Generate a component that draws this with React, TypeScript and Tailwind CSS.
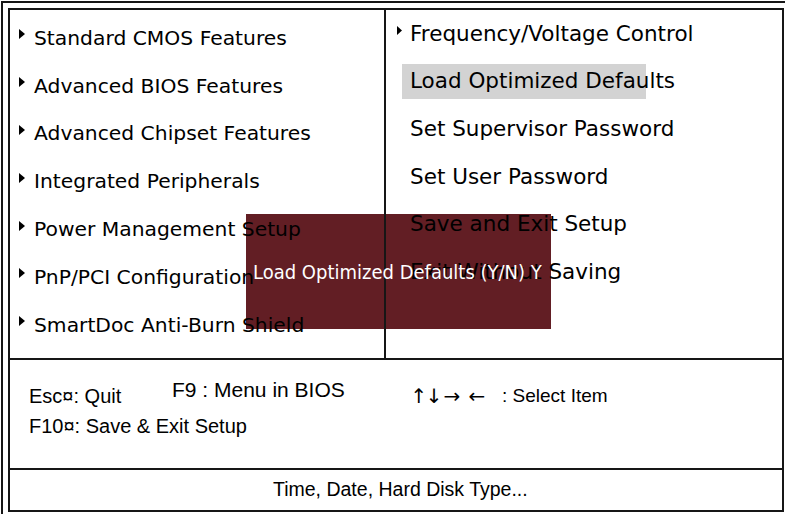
import React from "react";

const leftItems = [
  "Standard CMOS Features",
  "Advanced BIOS Features",
  "Advanced Chipset Features",
  "Integrated Peripherals",
  "Power Management Setup",
  "PnP/PCI Configuration",
  "SmartDoc Anti-Burn Shield",
];

const rightItems = [
  "Set Supervisor Password",
  "Set User Password",
  "Save and Exit Setup",
  "Exit Without Saving",
];

function Arrow({ small }: { small?: boolean }) {
  return small ? (
    <svg width="5" height="9" viewBox="0 0 5 9" className="shrink-0 mb-[6px]">
      <polygon points="0,0 5,4.5 0,9" fill="#000" />
    </svg>
  ) : (
    <svg width="6" height="10" viewBox="0 0 6 10" className="shrink-0 mb-[7px]">
      <polygon points="0,0 6,5 0,10" fill="#000" />
    </svg>
  );
}

export default function App() {
  return (
    <div className="relative isolate w-[785px] h-[514px] overflow-hidden bg-white pl-[1px] pt-[1px] text-black">
      <div className="h-full border-t-2 border-l-2 border-[#161616] pl-[5px] pt-[5px]">
        <div className="flex h-[504px] w-[776px] flex-col border-2 border-[#161616]">
          {/* menu */}
          <div className="flex h-[350px] border-b-2 border-[#161616] font-['DejaVu_Sans',sans-serif] leading-[24px]">
            <div className="flex w-[376px] flex-col border-r-2 border-[#161616] pl-[9px] pt-[4px] text-[20.3px]">
              {leftItems.map((item) => (
                <div key={item} className="flex h-[47.8px] items-center gap-[9px] whitespace-nowrap">
                  <Arrow />
                  <span>{item}</span>
                </div>
              ))}
            </div>
            <div className="flex flex-1 flex-col text-[21.5px]">
              <div className="flex h-[47.6px] items-center gap-[8px] whitespace-nowrap pl-[11px]">
                <Arrow small />
                <span>Frequency/Voltage Control</span>
              </div>
              <div className="flex h-[47.6px] items-center pl-[16px]">
                <div className="flex h-[35px] w-[244px] items-center whitespace-nowrap bg-[#d3d3d3] pl-[8px]">
                  Load Optimized Defaults
                </div>
              </div>
              {rightItems.map((item) => (
                <div key={item} className="flex h-[47.6px] items-center whitespace-nowrap pl-[24px]">
                  {item}
                </div>
              ))}
            </div>
          </div>

          {/* key help */}
          <div className="h-[110px] border-b-2 border-[#161616] pl-[19px] pt-[19px] font-['Liberation_Sans',Arial,sans-serif] text-[20px] leading-[22px]">
            <div className="flex items-end whitespace-nowrap">
              <div className="w-[143px]">Esc¤: Quit</div>
              <div className="mb-[6px] w-[238px] text-[21px]">F9 : Menu in BIOS</div>
              <div className="flex items-end text-[19px]">
                <span className="flex w-[92px] font-['DejaVu_Sans',sans-serif] text-[20px]">
                  <span className="flex w-[18px] justify-center">↑</span>
                  <span className="flex w-[12px] justify-center">↓</span>
                  <span className="flex w-[24px] justify-center">→</span>
                  <span className="flex w-[26px] justify-center">←</span>
                </span>
                <span>: Select Item</span>
              </div>
            </div>
            <div className="mt-[8px] whitespace-nowrap">F10¤: Save &amp; Exit Setup</div>
          </div>

          {/* status */}
          <div className="flex flex-1 items-center pb-[2px] pl-[263px] font-['Liberation_Sans',Arial,sans-serif] text-[19.5px] leading-[22px]">
            Time, Date, Hard Disk Type...
          </div>
        </div>
      </div>

      {/* confirm dialog */}
      <div className="absolute left-[246px] top-[214px] -z-10 h-[115px] w-[305px] bg-[#621e24]" />
      <div className="absolute left-[253px] top-[214px] flex h-[115px] items-center whitespace-nowrap font-['DejaVu_Sans_Condensed','DejaVu_Sans',sans-serif] text-[20px] text-white">
        Load Optimized Defaults (Y/N) Y
      </div>
    </div>
  );
}
